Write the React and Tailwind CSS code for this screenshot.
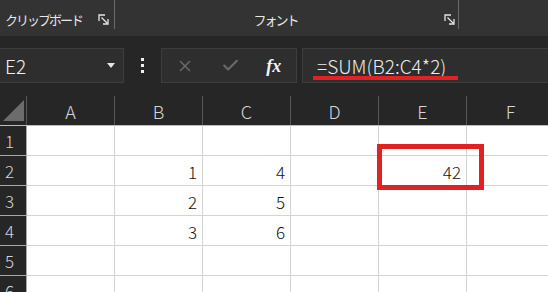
import React from 'react';
import { X, Check } from 'lucide-react';

// Excel-like sheet: ribbon group labels, formula bar and a small grid
const FONT = { fontFamily: '"Noto Sans CJK JP", "Noto Sans", sans-serif' };

const COLS = ['A', 'B', 'C', 'D', 'E', 'F'];
const ROWS = [
  { n: 1, cells: {} },
  { n: 2, cells: { B: '1', C: '4', E: '42' } },
  { n: 3, cells: { B: '2', C: '5' } },
  { n: 4, cells: { B: '3', C: '6' } },
  { n: 5, cells: {} },
  { n: 6, cells: {} },
];

const Launcher = () => (
  <svg width="11" height="11" viewBox="0 0 11 11" fill="none" stroke="#e6e6e6" strokeWidth="1.3">
    <path d="M1 7V1h6" />
    <path d="M3.5 3.5l6 6" />
    <path d="M10 5v5H5" />
  </svg>
);

const App = () => {
  return (
    <div className="relative w-[548px] h-[292px] overflow-hidden bg-[#262626]" style={FONT}>
      {/* ribbon group labels */}
      <div className="flex h-[36px] bg-[#333333] text-[#e8e8e8]">
        <div className="w-[115px] flex items-start">
          <div className="flex-1 flex items-center h-[29px] pt-[9px] pl-[5px] pr-[5px]">
            <span className="text-[13px] tracking-[-2px] leading-none">クリップボード</span>
            <span className="ml-auto mt-[1px]"><Launcher /></span>
          </div>
          <div className="w-px h-[29px] bg-[#6a6a6a]" />
        </div>
        <div className="w-[344px] flex items-start">
          <div className="flex-1 flex items-center h-[29px] pt-[9px] pr-[3px]">
            <span className="flex-1 text-center pr-[8px] text-[13px] tracking-[-2px] leading-none">フォント</span>
            <Launcher />
          </div>
          <div className="w-px h-[29px] bg-[#6a6a6a]" />
        </div>
      </div>

      {/* formula bar */}
      <div className="flex h-[60px] pt-[12px]">
        <div className="w-[124px] h-[35px] flex items-center bg-[#2e2e2e] border border-l-0 border-[#3d3d3d] pl-[5px] pr-[8px]">
          <span className="text-[19px] font-light text-[#f0f0f0] leading-none">E2</span>
          <svg className="ml-auto" width="8" height="5" viewBox="0 0 8 5">
            <polygon points="0,0 8,0 4,5" fill="#e6e6e6" />
          </svg>
        </div>
        <div className="w-[37px] h-[35px] flex flex-col items-center justify-center gap-[3px] pr-[1px]">
          <div className="w-[3px] h-[3px] bg-[#f0f0f0]" />
          <div className="w-[3px] h-[3px] bg-[#f0f0f0]" />
          <div className="w-[3px] h-[3px] bg-[#f0f0f0]" />
        </div>
        <div className="w-[136px] h-[35px] flex items-center bg-[#2e2e2e] border border-[#3d3d3d]">
          <div className="w-[45px] flex justify-center pl-[2px]">
            <X size={18} color="#6a6a6a" strokeWidth={2} />
          </div>
          <div className="w-[45px] flex justify-center pl-[2px]">
            <Check size={19} color="#6a6a6a" strokeWidth={2.6} />
          </div>
          <div className="w-[45px] flex justify-center">
            <span className="text-[18px] italic font-bold text-[#f4f4f4] leading-none" style={{ fontFamily: '"Liberation Serif", serif' }}>fx</span>
          </div>
        </div>
        <div className="flex-1 ml-[5px] h-[35px] flex items-center bg-[#2e2e2e] border border-r-0 border-[#3d3d3d] pl-[14px]">
          <span className="text-[19px] font-light text-[#ececec] leading-none">=SUM(B2:C4*2)</span>
        </div>
      </div>

      {/* sheet grid */}
      <div className="flex flex-col font-light">
        <div className="flex h-[30px] border-b border-[#bdbdbd]">
          <div className="w-[27px] shrink-0 border-r border-[#555555]">
            <svg width="27" height="29" viewBox="0 0 27 29">
              <polygon points="3,25 24,25 24,4" fill="#6c6c6c" />
            </svg>
          </div>
          {COLS.map((c) => (
            <div key={c} className="w-[88px] shrink-0 flex items-center justify-center border-r border-[#555555] text-[18px] text-[#d6d6d6] pt-[1px]">
              {c}
            </div>
          ))}
        </div>
        {ROWS.map((r) => (
          <div key={r.n} className="flex h-[30px]">
            <div className="w-[27px] shrink-0 flex items-center pl-[5px] border-b border-r border-[#a8a8a8] text-[17px] text-[#d6d6d6]">
              {r.n}
            </div>
            {COLS.map((c) => (
              <div key={c} className="w-[88px] shrink-0 flex items-center justify-end pr-[5px] pt-[2px] bg-white border-b border-r border-[#d4d4d4] text-[17px] text-[#111111]">
                {r.cells[c] || ''}
              </div>
            ))}
          </div>
        ))}
      </div>

      {/* annotations */}
      <div className="absolute left-[313px] top-[76px] w-[145px] h-[4px] bg-[#e22222]" />
      <div className="absolute left-[377px] top-[144px] w-[107px] h-[46px] border-[5px] border-[#e22222]" />
    </div>
  );
};

export default App;
